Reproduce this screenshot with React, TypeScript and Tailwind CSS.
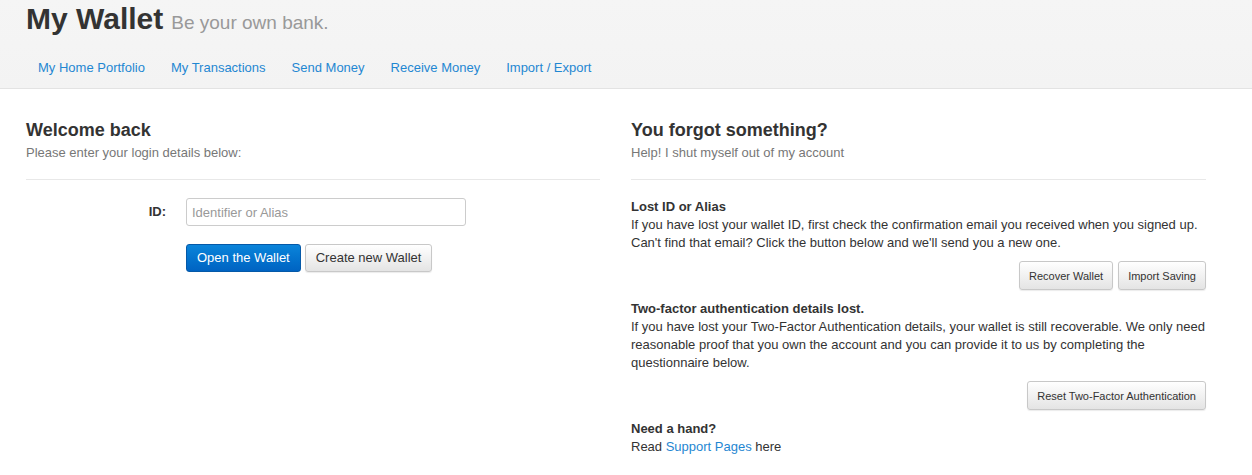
import React from 'react';

const navLinks = ['My Home Portfolio', 'My Transactions', 'Send Money', 'Receive Money', 'Import / Export'];

const btnDefault =
  'inline-flex items-center rounded-[3px] border border-[#c8c8c8] bg-gradient-to-b from-white to-[#e4e4e4] text-[#333] shadow-[0_1px_1px_rgba(0,0,0,0.08)]';

export default function App() {
  return (
    <div className="min-h-[475px] bg-white text-[13px] text-[#333] font-['Liberation_Sans',Arial,sans-serif]">
      {/* Header */}
      <div className="h-[89px] border-b border-[#e3e3e3] bg-gradient-to-b from-[#f5f5f5] to-[#f3f3f3]">
        <div className="px-[26px]">
          <h1 className="flex items-baseline gap-[8px] h-[38px] leading-[38px]">
            <span className="text-[30px] font-bold text-[#333]">My Wallet</span>
            <span className="text-[19px] text-[#999]">Be your own bank.</span>
          </h1>
          <nav className="mt-[20px] flex gap-[2px]">
            {navLinks.map((l) => (
              <a key={l} className="px-[12px] leading-[20px] text-[13px] text-[#1f87d2]">
                {l}
              </a>
            ))}
          </nav>
        </div>
      </div>

      {/* Content */}
      <div className="px-[26px] pt-[30px] grid grid-cols-[574px_575px] gap-x-[31px]">
        {/* Left column */}
        <div>
          <h2 className="text-[18px] font-bold leading-[22px]">Welcome back</h2>
          <p className="mt-[3px] text-[13px] leading-[18px] text-[#777]">Please enter your login details below:</p>
          <hr className="mt-[17px] border-t border-[#e8e8e8]" />
          <div className="mt-[18px] flex items-center">
            <label className="w-[160px] pr-[20px] text-right font-bold">ID:</label>
            <input
              placeholder="Identifier or Alias"
              className="h-[28px] w-[280px] rounded-[3px] border border-[#ccc] px-[5px] text-[13px] placeholder-[#999] outline-none"
            />
          </div>
          <div className="mt-[18px] ml-[160px] flex gap-[4px]">
            <button className="h-[28px] rounded-[3px] border border-[#0559a8] bg-gradient-to-b from-[#0b84da] to-[#0063c2] px-[10px] text-white">
              Open the Wallet
            </button>
            <button className={`${btnDefault} h-[28px] px-[10px]`}>Create new Wallet</button>
          </div>
        </div>

        {/* Right column */}
        <div>
          <h2 className="text-[18px] font-bold leading-[22px]">You forgot something?</h2>
          <p className="mt-[3px] text-[13px] leading-[18px] text-[#777]">Help! I shut myself out of my account</p>
          <hr className="mt-[17px] border-t border-[#e8e8e8]" />

          <div className="mt-[18px] leading-[18px]">
            <h3 className="font-bold">Lost ID or Alias</h3>
            <p>
              If you have lost your wallet ID, first check the confirmation email you received when you signed up.
              Can't find that email? Click the button below and we'll send you a new one.
            </p>
            <div className="mt-[9px] flex justify-end gap-[5px]">
              <button className={`${btnDefault} h-[29px] px-[9px] text-[11px]`}>Recover Wallet</button>
              <button className={`${btnDefault} h-[29px] px-[9px] text-[11px]`}>Import Saving</button>
            </div>
          </div>

          <div className="mt-[10px] leading-[18px]">
            <h3 className="font-bold">Two-factor authentication details lost.</h3>
            <p>
              If you have lost your Two-Factor Authentication details, your wallet is still recoverable. We only need
              reasonable proof that you own the account and you can provide it to us by completing the questionnaire
              below.
            </p>
            <div className="mt-[9px] flex justify-end">
              <button className={`${btnDefault} h-[29px] px-[9px] text-[11px]`}>Reset Two-Factor Authentication</button>
            </div>
          </div>

          <div className="mt-[10px] leading-[18px]">
            <h3 className="font-bold">Need a hand?</h3>
            <p>
              Read <a className="text-[#1f87d2]">Support Pages</a> here
            </p>
          </div>
        </div>
      </div>
    </div>
  );
}
